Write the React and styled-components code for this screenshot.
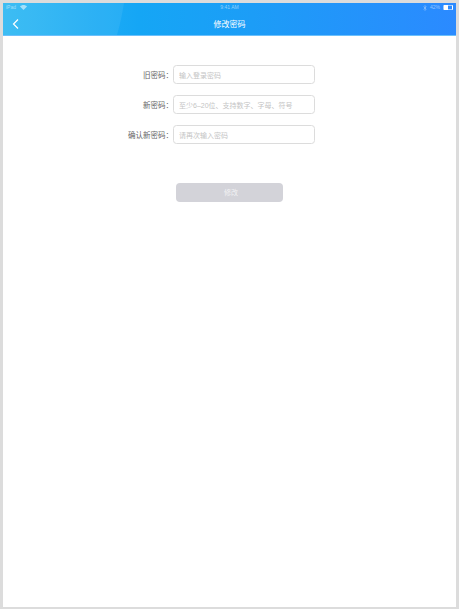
import React from "react";
import styled, { createGlobalStyle } from "styled-components";

const GlobalStyle = createGlobalStyle`
  html, body {
    margin: 0;
    padding: 0;
    background: #dcdcdc;
  }
  body {
    font-family: "Liberation Sans", "Noto Sans CJK SC", sans-serif;
  }
`;

const Page = styled.div`
  width: 459px;
  height: 609px;
  box-sizing: border-box;
  padding: 3px 3px 2px 3px;
  overflow: hidden;
`;

const Screen = styled.div`
  height: 100%;
  background: #fff;
  display: flex;
  flex-direction: column;
`;

const Header = styled.header`
  position: relative;
  height: 32px;
  flex-shrink: 0;
  background: linear-gradient(90deg, #2fb8f3 0%, #15a6f5 30%, #1c9df7 55%, #2b8aff 100%);
  border-bottom: 1px solid #6cc0fb;
  color: #fff;
  overflow: hidden;
`;

const Sheen = styled.svg`
  position: absolute;
  left: 0;
  top: 0;
`;

const StatusBar = styled.div`
  position: relative;
  height: 9px;
  display: grid;
  grid-template-columns: 1fr auto 1fr;
  align-items: center;
  padding: 0 3px;
  font-size: 5px;
  line-height: 9px;
  color: rgba(255, 255, 255, 0.5);
`;

const StatusLeft = styled.div`
  display: flex;
  align-items: center;
  gap: 4px;
`;

const StatusRight = styled.div`
  display: flex;
  align-items: center;
  justify-content: flex-end;
  gap: 3px;
`;

const Battery = styled.span`
  display: block;
  width: 10px;
  height: 5px;
  box-sizing: border-box;
  border: 1px solid rgba(255, 255, 255, 0.55);
  border-radius: 1px;
  background: linear-gradient(90deg, #fff 55%, transparent 55%);
`;

const NavBar = styled.div`
  position: relative;
  height: 22px;
  display: flex;
  align-items: center;
  justify-content: center;
`;

const BackButton = styled.span`
  position: absolute;
  left: 8px;
  top: 6px;
  display: flex;
`;

const Title = styled.h1`
  margin: 0;
  padding-top: 3px;
  font-size: 8px;
  font-weight: 400;
  line-height: 22px;
`;

const Form = styled.form`
  display: grid;
  grid-template-columns: 170px 142px;
  row-gap: 11px;
  align-items: center;
  padding-top: 29px;
`;

const Label = styled.label`
  text-align: right;
  font-size: 7.5px;
  color: #666;
  white-space: nowrap;
`;

const Field = styled.input`
  width: 142px;
  height: 19px;
  box-sizing: border-box;
  padding: 1px 5px 0;
  border: 1px solid #dcdcdc;
  border-radius: 3.5px;
  background: #fff;
  font-family: inherit;
  font-size: 7px;
  outline: none;

  &::placeholder {
    color: #c4c4c4;
    opacity: 1;
  }
`;

const SubmitButton = styled.button`
  display: block;
  width: 107px;
  height: 19px;
  margin: 39px 0 0 173px;
  padding: 0 0 1px 3px;
  border: 0;
  border-radius: 4px;
  background: #d3d3d9;
  color: #f2f2f4;
  font-family: inherit;
  font-size: 7px;
`;

const fields = [
  { label: "旧密码：", hint: "输入登录密码" },
  { label: "新密码：", hint: "至少6–20位、支持数字、字母、符号" },
  { label: "确认新密码：", hint: "请再次输入密码" },
];

const App = () => {
  return (
    <Page>
      <GlobalStyle />
      <Screen>
        <Header>
          <Sheen width="125" height="32" viewBox="0 0 125 32">
            <path d="M0 0H121C119 12 117 22 114 32H0Z" fill="#fff" opacity="0.07" />
          </Sheen>
          <StatusBar>
            <StatusLeft>
              <span>iPad</span>
              <svg width="7" height="5" viewBox="0 0 7 5">
                <path d="M0 1.6C2 -.4 5 -.4 7 1.6L3.5 5Z" fill="#fff" opacity="0.55" />
              </svg>
            </StatusLeft>
            <span>9:41 AM</span>
            <StatusRight>
              <svg width="4" height="6" viewBox="0 0 4 6">
                <path d="M.5 1.5L3.2 4.2 2 5.5V.5L3.2 1.8.5 4.5" fill="none" stroke="#fff" strokeWidth="0.5" opacity="0.55" />
              </svg>
              <span>42%</span>
              <Battery />
            </StatusRight>
          </StatusBar>
          <NavBar>
            <BackButton>
              <svg width="10" height="12" viewBox="0 0 10 12">
                <path d="M7 1.5L2.5 6L7 10.5" fill="none" stroke="#fff" strokeWidth="1.2" />
              </svg>
            </BackButton>
            <Title>修改密码</Title>
          </NavBar>
        </Header>
        <Form>
          {fields.map((f) => (
            <React.Fragment key={f.label}>
              <Label>{f.label}</Label>
              <Field placeholder={f.hint} />
            </React.Fragment>
          ))}
        </Form>
        <SubmitButton type="button">修改</SubmitButton>
      </Screen>
    </Page>
  );
};

export default App;
